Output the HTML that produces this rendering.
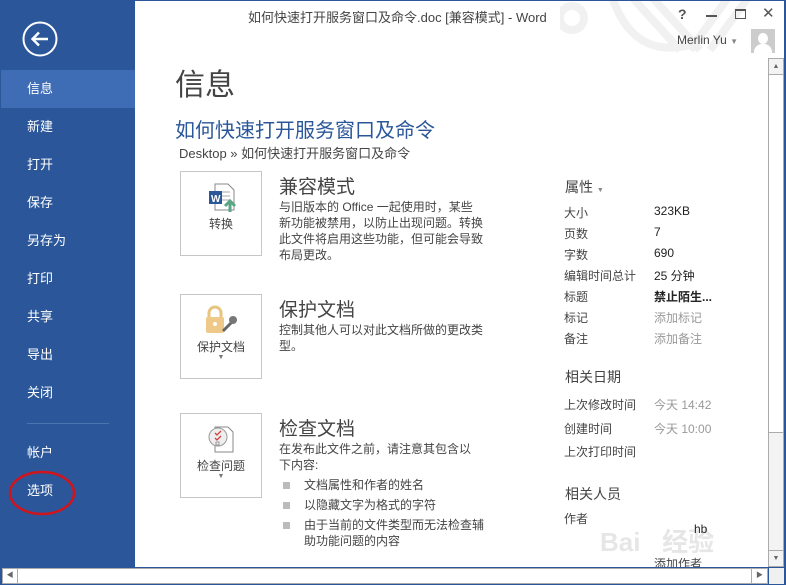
<!DOCTYPE html>
<html><head><meta charset="utf-8"><style>
*{margin:0;padding:0;box-sizing:border-box}
body{width:786px;height:585px;overflow:hidden;background:#fff;font-family:"Liberation Sans","Noto Sans CJK SC",sans-serif;color:#444;position:relative}
.a{position:absolute;white-space:nowrap}
#side{position:absolute;left:0;top:0;width:135px;height:567px;background:#2b579a}
.nav{position:absolute;left:27px;color:#fff;font-size:13px}
.sel{position:absolute;left:1px;top:70px;width:134px;height:38px;background:#3e6db5}
.box{position:absolute;left:180px;width:82px;height:85px;border:1px solid #c6c6c6;background:#fff;text-align:center;font-size:12px;color:#444}
.h{font-size:19px;color:#444}
.p{font-size:12px;line-height:16px;color:#444}
.k{font-size:12px;color:#444}
.v{font-size:12px;color:#222}
.g{font-size:12px;color:#999}
.sq{position:absolute;width:7px;height:7px;background:#bbb}
</style></head><body>
<div id="side"></div>
<div class="sel"></div>
<svg class="a" style="left:21px;top:20px" width="38" height="38"><circle cx="19" cy="19" r="16.5" fill="none" stroke="#fff" stroke-width="2"/><path d="M27 19H12M18 12.5L11.5 19L18 25.5" fill="none" stroke="#fff" stroke-width="2.4"/></svg>
<div class="nav" style="top:78px">信息</div>
<div class="nav" style="top:116px">新建</div>
<div class="nav" style="top:154px">打开</div>
<div class="nav" style="top:192px">保存</div>
<div class="nav" style="top:230px">另存为</div>
<div class="nav" style="top:268px">打印</div>
<div class="nav" style="top:306px">共享</div>
<div class="nav" style="top:344px">导出</div>
<div class="nav" style="top:382px">关闭</div>
<div class="a" style="left:27px;top:423px;width:82px;height:1px;background:#4c74b0"></div>
<div class="nav" style="top:442px">帐户</div>
<div class="nav" style="top:480px">选项</div>
<svg class="a" style="left:8px;top:469px" width="70" height="48"><ellipse cx="34" cy="24" rx="32" ry="21" fill="none" stroke="#d0141c" stroke-width="2.5"/></svg>

<svg class="a" style="left:560px;top:0" width="210" height="55"><g fill="none" stroke="#f1f1f1" stroke-width="8"><circle cx="12" cy="18" r="12"/><path d="M50 -10 Q70 60 130 45"/><path d="M70 -5 L120 50M90 -5 L140 50M170 -5L130 50M190 -5L150 50"/></g></svg>
<div class="a" style="left:248px;top:7px;font-size:13px;color:#444">如何快速打开服务窗口及命令.doc [兼容模式] - Word</div>
<div class="a" style="left:678px;top:6px;font-size:14px;font-weight:bold;color:#555">?</div>
<div class="a" style="left:706px;top:15px;width:11px;height:2px;background:#555"></div>
<div class="a" style="left:735px;top:9px;width:11px;height:10px;border:1px solid #555;border-top-width:2px"></div>
<div class="a" style="left:762px;top:4px;font-size:15px;color:#555">✕</div>
<div class="a" style="left:677px;top:33px;font-size:12px;color:#444">Merlin Yu <span style="font-size:8px;color:#888">▼</span></div>
<div class="a" style="left:751px;top:29px;width:24px;height:24px;background:#ccc;overflow:hidden"><div class="a" style="left:7px;top:4px;width:10px;height:11px;border-radius:50%;background:#fff"></div><div class="a" style="left:3px;top:15px;width:18px;height:14px;border-radius:8px 8px 0 0;background:#fff"></div></div>

<div class="a" style="left:175px;top:60px;font-size:30px;color:#444">信息</div>
<div class="a" style="left:175px;top:114px;font-size:20px;color:#2b579a">如何快速打开服务窗口及命令</div>
<div class="a" style="left:179px;top:143px;font-size:13px;color:#444">Desktop » 如何快速打开服务窗口及命令</div>

<div class="box" style="top:171px"><svg class="a" style="left:25px;top:10px" width="32" height="32"><path d="M9 2h13l6 6v20H9z" fill="#fff" stroke="#888"/><path d="M13 10h11M13 14h11M13 18h11" stroke="#aaa"/><rect x="3" y="9" width="13" height="13" fill="#2b579a"/><text x="5" y="20" font-size="10" fill="#fff" font-weight="bold" font-family="Liberation Sans">W</text><path d="M24 30V20M19 24l5-5 5 5" stroke="#5aa586" stroke-width="3" fill="none"/></svg><div class="a" style="left:0;width:80px;top:43px">转换</div></div>
<div class="a h" style="left:279px;top:172px">兼容模式</div>
<div class="a p" style="left:279px;top:199px">与旧版本的 Office 一起使用时，某些<br>新功能被禁用，以防止出现问题。转换<br>此文件将启用这些功能，但可能会导致<br>布局更改。</div>

<div class="box" style="top:294px"><svg class="a" style="left:22px;top:10px" width="36" height="32"><path d="M6 12V8a6 6 0 0 1 12 0v4" fill="none" stroke="#e8c57f" stroke-width="3"/><rect x="3" y="12" width="18" height="16" rx="2" fill="#eec98a"/><circle cx="12" cy="19" r="2" fill="#fff"/><path d="M20 26l9-9" stroke="#666" stroke-width="3"/><circle cx="30" cy="15" r="4" fill="#777"/></svg><div class="a" style="left:0;width:80px;top:43px">保护文档</div><div class="a" style="left:0;width:80px;top:59px;font-size:7px;color:#777">▼</div></div>
<div class="a h" style="left:279px;top:295px">保护文档</div>
<div class="a p" style="left:279px;top:322px">控制其他人可以对此文档所做的更改类<br>型。</div>

<div class="box" style="top:413px"><svg class="a" style="left:24px;top:10px" width="32" height="32"><path d="M10 3h13l5 5v20H10z" fill="#fff" stroke="#888"/><circle cx="13" cy="13" r="9" fill="#eee" stroke="#999"/><path d="M10 9l2 2 4-4M10 14l2 2 4-4" stroke="#d04040" fill="none" stroke-width="1.3"/><rect x="11" y="18" width="3" height="3" fill="none" stroke="#999"/></svg><div class="a" style="left:0;width:80px;top:43px">检查问题</div><div class="a" style="left:0;width:80px;top:59px;font-size:7px;color:#777">▼</div></div>
<div class="a h" style="left:279px;top:414px">检查文档</div>
<div class="a p" style="left:279px;top:441px">在发布此文件之前，请注意其包含以<br>下内容:</div>
<div class="sq" style="left:283px;top:482px"></div><div class="a p" style="left:304px;top:477px">文档属性和作者的姓名</div>
<div class="sq" style="left:283px;top:502px"></div><div class="a p" style="left:304px;top:497px">以隐藏文字为格式的字符</div>
<div class="sq" style="left:283px;top:522px"></div><div class="a p" style="left:304px;top:517px">由于当前的文件类型而无法检查辅<br>助功能问题的内容</div>

<div class="a" style="left:565px;top:177px;font-size:14px;color:#444">属性 <span style="font-size:7px;color:#888">▼</span></div>
<div class="a k" style="left:564px;top:204px">大小</div><div class="a v" style="left:654px;top:204px">323KB</div>
<div class="a k" style="left:564px;top:225px">页数</div><div class="a v" style="left:654px;top:225px">7</div>
<div class="a k" style="left:564px;top:246px">字数</div><div class="a v" style="left:654px;top:246px">690</div>
<div class="a k" style="left:564px;top:267px">编辑时间总计</div><div class="a v" style="left:654px;top:267px">25 分钟</div>
<div class="a k" style="left:564px;top:288px">标题</div><div class="a v" style="left:654px;top:288px;font-weight:bold">禁止陌生...</div>
<div class="a k" style="left:564px;top:309px">标记</div><div class="a g" style="left:654px;top:309px">添加标记</div>
<div class="a k" style="left:564px;top:330px">备注</div><div class="a g" style="left:654px;top:330px">添加备注</div>
<div class="a" style="left:565px;top:367px;font-size:14px">相关日期</div>
<div class="a k" style="left:564px;top:396px">上次修改时间</div><div class="a g" style="left:654px;top:396px">今天 14:42</div>
<div class="a k" style="left:564px;top:420px">创建时间</div><div class="a g" style="left:654px;top:420px">今天 10:00</div>
<div class="a k" style="left:564px;top:443px">上次打印时间</div>
<div class="a" style="left:565px;top:484px;font-size:14px">相关人员</div>
<div class="a k" style="left:564px;top:510px">作者</div>
<div class="a" style="left:600px;top:522px;font-size:26px;color:rgba(200,200,200,.45);font-weight:bold">Bai&nbsp;&nbsp;&nbsp;经验</div>
<div class="a v" style="left:694px;top:522px">hb</div>
<div class="a k" style="left:654px;top:555px">添加作者</div>

<div class="a" style="left:768px;top:58px;width:16px;height:509px;background:#f3f3f3;border:1px solid #ababab"></div>
<div class="a" style="left:769px;top:59px;width:14px;height:16px;border-bottom:1px solid #ababab;font-size:7px;text-align:center;line-height:16px;color:#666">▲</div>
<div class="a" style="left:769px;top:75px;width:14px;height:358px;background:#fff;border-bottom:1px solid #ababab"></div>
<div class="a" style="left:769px;top:550px;width:14px;height:16px;border-top:1px solid #ababab;font-size:7px;text-align:center;line-height:16px;color:#666">▼</div>
<div class="a" style="left:0;top:567px;width:786px;height:18px;background:#2b579a"></div>
<div class="a" style="left:2px;top:568px;width:766px;height:16px;background:#fff;border:1px solid #ababab"></div>
<div class="a" style="left:3px;top:569px;width:15px;height:14px;border-right:1px solid #ababab;font-size:7px;text-align:center;line-height:14px;color:#666">◀</div>
<div class="a" style="left:751px;top:569px;width:16px;height:14px;border-left:1px solid #ababab;font-size:7px;text-align:center;line-height:14px;color:#666">▶</div>
<div class="a" style="left:769px;top:568px;width:15px;height:16px;background:#f0f0f0"></div>
<div class="a" style="left:784px;top:0;width:2px;height:585px;background:#2b579a"></div>
<div class="a" style="left:135px;top:0;width:651px;height:1px;background:#2b579a"></div>
</body></html>
